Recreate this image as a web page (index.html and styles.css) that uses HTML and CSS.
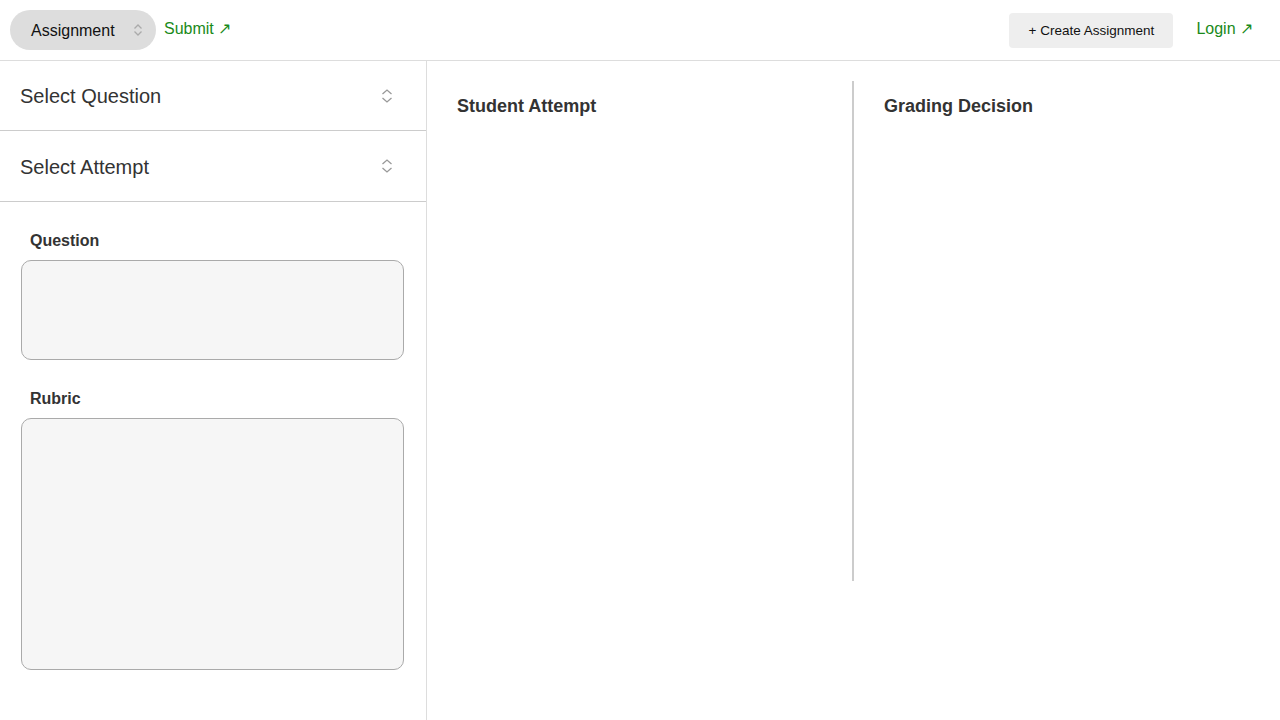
FILE: index.html
```html
<!DOCTYPE html>
<html>
<head>
<meta charset="utf-8">
<link rel="stylesheet" href="styles.css">
</head>
<body>
<header class="topbar">
  <div class="left">
    <div class="pill-select">
      <span>Assignment</span>
      <svg class="chev" width="10" height="14" viewBox="0 0 10 14"><path d="M1.5 5.5 L5 2 L8.5 5.5 M1.5 8.5 L5 12 L8.5 8.5" fill="none" stroke="#aaa" stroke-width="1.3"/></svg>
    </div>
    <a class="link" href="#">Submit ↗</a>
  </div>
  <div class="right">
    <button class="create">+ Create Assignment</button>
    <a class="link login" href="#">Login ↗</a>
  </div>
</header>
<div class="layout">
  <aside class="sidebar">
    <div class="sel-row">
      <span>Select Question</span>
      <svg class="chev row-chev" width="12" height="16" viewBox="0 0 12 16"><path d="M1.5 6 L6 2 L10.5 6 M1.5 10 L6 14 L10.5 10" fill="none" stroke="#999" stroke-width="1.3"/></svg>
    </div>
    <div class="sel-row">
      <span>Select Attempt</span>
      <svg class="chev row-chev" width="12" height="16" viewBox="0 0 12 16"><path d="M1.5 6 L6 2 L10.5 6 M1.5 10 L6 14 L10.5 10" fill="none" stroke="#999" stroke-width="1.3"/></svg>
    </div>
    <div class="fields">
      <label class="lbl">Question</label>
      <div class="box box-q"></div>
      <label class="lbl">Rubric</label>
      <div class="box box-r"></div>
    </div>
  </aside>
  <main class="main">
    <section class="col col-left"><h2>Student Attempt</h2></section>
    <section class="col"><h2>Grading Decision</h2></section>
  </main>
</div>
</body>
</html>
```
FILE: styles.css
```css
* { box-sizing: border-box; }
html, body { margin: 0; padding: 0; background: #fff; }
body { font-family: "Liberation Sans", Arial, sans-serif; color: #333; width: 1280px; height: 720px; overflow: hidden; }
.topbar {
  height: 61px;
  border-bottom: 1px solid #ddd;
  display: flex;
  justify-content: space-between;
  align-items: flex-start;
}
.left { display: flex; align-items: flex-start; padding: 10px 0 0 10px; gap: 8px; }
.pill-select {
  width: 146px; height: 40px;
  background: #ddd; border-radius: 20px;
  display: flex; align-items: center; justify-content: space-between;
  padding: 0 13px 0 21px;
  font-size: 16px; color: #111;
}
.pill-select span { margin-top: 1px; }
.link { color: #1a8a1a; text-decoration: none; font-size: 16px; line-height: 18px; margin-top: 10px; display: inline-block; }
.right { display: flex; align-items: flex-start; padding: 13px 27px 0 0; gap: 23px; }
.create {
  font-family: "Liberation Sans", Arial, sans-serif;
  background: #eee; border: none; border-radius: 4px;
  height: 35px; width: 164px; font-size: 13.5px; color: #111;
  padding: 0;
}
.login { margin-top: 7px; }
.layout { display: flex; height: 659px; }
.sidebar { width: 427px; border-right: 1px solid #ddd; flex-shrink: 0; }
.sel-row {
  height: 71px; border-bottom: 1px solid #ccc;
  display: flex; align-items: center; justify-content: space-between;
  padding: 2px 33px 0 20px;
  font-size: 20px; color: #333;
}
.row-chev { margin-top: -2px; }
.sel-row:first-child { height: 70px; }
.fields { padding: 29px 22px 0 21px; display: flex; flex-direction: column; }
.lbl { font-weight: bold; font-size: 16px; margin-left: 9px; line-height: 20px; margin-bottom: 9px; }
.box { background: #f6f6f6; border: 1px solid #aaa; border-radius: 10px; width: 383px; }
.box-q { height: 100px; margin-bottom: 29px; }
.box-r { height: 252px; }
.main { flex: 1; display: flex; padding-top: 20px; align-items: flex-start; }
.col { width: 426px; height: 500px; padding: 14px 30px 0 30px; }
.col-left { width: 427px; border-right: 2px solid #ccc; }
h2 { margin: 0; font-size: 18px; font-weight: bold; color: #333; line-height: 22px; }
```
